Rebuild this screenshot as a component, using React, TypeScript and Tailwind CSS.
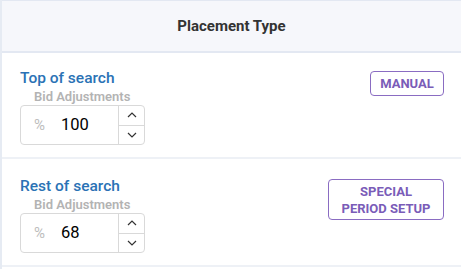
import React from "react";

function Stepper({ value }: { value: string }) {
  return (
    <div className="flex h-[40px] w-[125px] rounded-[4px] border border-[#d9d9d9] bg-white">
      <div className="flex flex-1 items-center pl-[13px]">
        <span className="w-[27px] text-[15px] text-[#bdbdbd]">%</span>
        <span className="text-[16.5px] text-black">{value}</span>
      </div>
      <div className="flex w-[26px] flex-col border-l border-[#d9d9d9]">
        <div className="flex flex-1 items-center justify-center border-b border-[#d9d9d9]">
          <svg width="10" height="6" viewBox="0 0 10 6" fill="none">
            <path d="M1 5L5 1L9 5" stroke="#333" strokeWidth="1.2" />
          </svg>
        </div>
        <div className="flex flex-1 items-center justify-center">
          <svg width="10" height="6" viewBox="0 0 10 6" fill="none">
            <path d="M1 1L5 5L9 1" stroke="#333" strokeWidth="1.2" />
          </svg>
        </div>
      </div>
    </div>
  );
}

function Row({
  title,
  value,
  button,
}: {
  title: string;
  value: string;
  button: React.ReactNode;
}) {
  return (
    <div className="flex h-[106px] border-b-2 border-[#eef1f6] pl-[18px] pr-[17px]">
      <div className="flex flex-1 flex-col pt-[16px]">
        <div className="text-[15.5px] font-medium leading-[19px] text-[#2a72b5]">{title}</div>
        <div className="mt-[1px] pl-[14px] text-[13px] font-semibold leading-[16px] text-[#b3b3b3]">
          Bid Adjustments
        </div>
        <div className="mt-[0px]">
          <Stepper value={value} />
        </div>
      </div>
      <div className="pt-[18px]">{button}</div>
    </div>
  );
}

export default function App() {
  return (
    <div
      className="w-[461px] h-[269px] bg-white border-l-2 border-[#e6ebf3]"
      style={{ fontFamily: "Roboto, 'Liberation Sans', sans-serif" }}
    >
      <div className="flex h-[53px] items-center justify-center border-t border-b-2 border-[#e3e8f2] bg-[#f6f7fb]">
        <span className="text-[15px] font-bold text-[#333333]">Placement Type</span>
      </div>
      <Row
        title="Top of search"
        value="100"
        button={
          <div className="flex h-[25px] w-[74px] items-center justify-center rounded-[4px] border border-[#8a6cc2] text-[13px] font-bold text-[#7a5cb8]">
            MANUAL
          </div>
        }
      />
      <div className="h-[2px]" />
      <Row
        title="Rest of search"
        value="68"
        button={
          <div className="flex h-[41px] w-[116px] flex-col items-center justify-center rounded-[4px] border border-[#8a6cc2] text-[13px] font-bold leading-[17px] text-[#7a5cb8]">
            <span>SPECIAL</span>
            <span>PERIOD SETUP</span>
          </div>
        }
      />
    </div>
  );
}
